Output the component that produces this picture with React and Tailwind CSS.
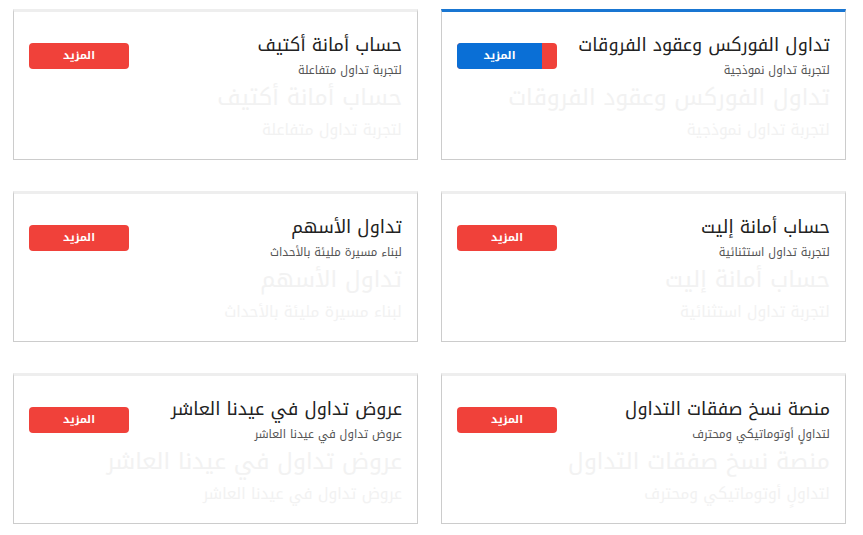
import React from "react";

const cards = [
  { t: "تداول الفوركس وعقود الفروقات", s: "لتجربة تداول نموذجية", active: true },
  { t: "حساب أمانة أكتيف", s: "لتجربة تداول متفاعلة" },
  { t: "حساب أمانة إليت", s: "لتجربة تداول استثنائية" },
  { t: "تداول الأسهم", s: "لبناء مسيرة مليئة بالأحداث" },
  { t: "منصة نسخ صفقات التداول", s: "لتداولٍ أوتوماتيكي ومحترف" },
  { t: "عروض تداول في عيدنا العاشر", s: "عروض تداول في عيدنا العاشر" },
];

function Card({ t, s, active }) {
  return (
    <div
      className={
        "h-[151px] overflow-hidden border border-[#cccccc] border-t-[3px] bg-white flex flex-row px-[15px] pt-[18px] " +
        (active ? "border-t-[#1976d2]" : "border-t-[#eeeeee]")
      }
    >
      <div className="flex-1 min-w-0 flex flex-col items-start whitespace-nowrap">
        <div className="text-[18px] leading-[30px] text-[#222222]">{t}</div>
        <div className="text-[11.5px] leading-[18px] text-[#555555] mt-[1px]">{s}</div>
        <div className="text-[23px] leading-[32px] text-[#f2f2f2] mt-[3px]">{t}</div>
        <div className="text-[15.5px] leading-[24px] text-[#f2f2f2] mt-[4px]">{s}</div>
      </div>
      <div className="pt-[13px] shrink-0 w-[100px]">
        {active ? (
          <div className="w-[100px] h-[26px] rounded-[4px] bg-[#f0413a] overflow-hidden flex flex-row-reverse">
            <div className="w-[85px] h-full bg-[#0a6fd6] flex items-center justify-center text-white text-[11px] font-bold">
              المزيد
            </div>
          </div>
        ) : (
          <div className="w-[100px] h-[26px] rounded-[4px] bg-[#f0413a] flex items-center justify-center text-white text-[11px] font-bold">
            المزيد
          </div>
        )}
      </div>
    </div>
  );
}

export default function App() {
  return (
    <div
      dir="rtl"
      className="w-[863px] h-[535px] bg-white pt-[9px] pr-[17px] pl-[13px]"
      style={{ fontFamily: '"Noto Kufi Arabic", "DejaVu Sans", sans-serif' }}
    >
      <div className="grid grid-cols-[405px_405px] gap-x-[23px] gap-y-[31px]">
        {cards.map((c, i) => (
          <Card key={i} {...c} />
        ))}
      </div>
    </div>
  );
}
